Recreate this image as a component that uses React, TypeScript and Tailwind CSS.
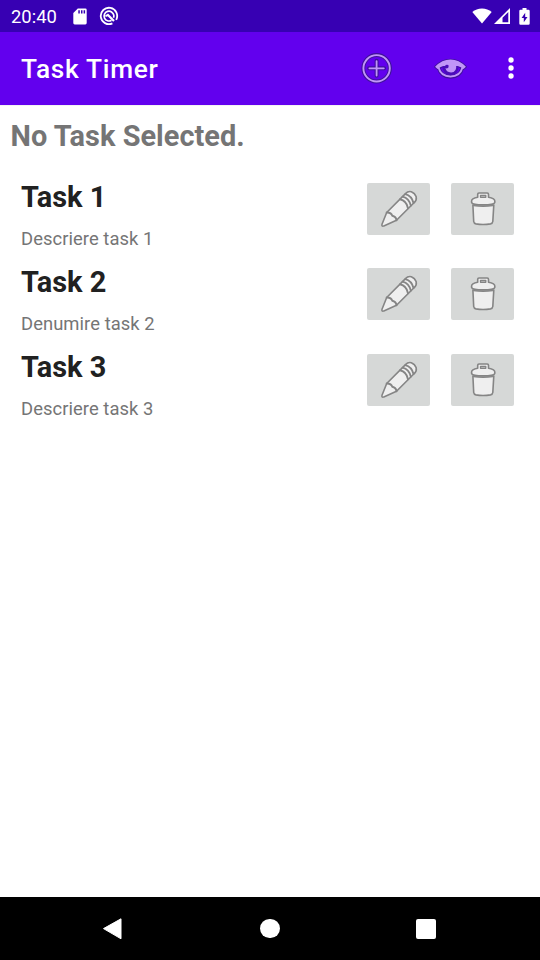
import React from "react";

type IconProps = { className?: string };

const SdCardIcon = ({ className }: IconProps) => (
  <svg viewBox="0 0 14 17" className={className}>
    <path d="M4.8 .5H12.3Q13.7 .5 13.7 1.9V15.1Q13.7 16.5 12.3 16.5H1.7Q.3 16.5 .3 15.1V5Z" fill="#fff" />
    <path d="M5.3 2.2h1.5v3.3H5.3zM8 2.2h1.5v3.3H8zM10.6 2.2h1.5v3.3h-1.5z" fill="#3700b3" />
  </svg>
);

const DebugIcon = ({ className }: IconProps) => (
  <svg viewBox="0 0 20 20" className={className} fill="none" stroke="#fff">
    <path d="M13.4 17.4A8.200 8.200 0 1 1 17.200 13.800" strokeWidth="1.800" />
    <path d="M12.500 14.300A4.900 4.900 0 1 1 14.800 9.200Q15 10.500 14.500 11.800" strokeWidth="1.700" />
    <path d="M8.200 8.200 15 15" strokeWidth="2.200" />
    <path d="M6.500 10.500Q7.500 9 9.500 9.500" strokeWidth="1.600" />
  </svg>
);

const WifiIcon = ({ className }: IconProps) => (
  <svg viewBox="0 0 20 16" className={className}>
    <path d="M.3 4.1Q4.3 .6 10 .6T19.7 4.1L10 15.6Z" fill="#fff" />
  </svg>
);

const SignalIcon = ({ className }: IconProps) => (
  <svg viewBox="0 0 16 16" className={className}>
    <path fillRule="evenodd" d="M0 16 16 0V16ZM8.5 9.8V14.3H14.3V4Z" fill="#fff" />
  </svg>
);

const BatteryIcon = ({ className }: IconProps) => (
  <svg viewBox="0 0 11 17" className={className}>
    <path d="M3.5 0h4v1.8h2q1.2 0 1.2 1.2v12.5q0 1.2-1.2 1.2h-8Q.3 16.700 .3 15.500V3Q.3 1.800 1.500 1.800h2Z" fill="#fff" />
    <path d="M6.200 4.700 2.600 10h2.200v4.300L8.500 8.900H6.200Z" fill="#3700b3" />
  </svg>
);

const AddIcon = ({ className }: IconProps) => (
  <svg viewBox="0 0 32 32" className={className} fill="none">
    <circle cx="15.600" cy="16.300" r="13.300" stroke="#3f129a" strokeWidth="4" />
    <path d="M15.600 8.800v15M8.100 16.300h15" stroke="#3f129a" strokeWidth="4" strokeLinecap="round" />
    <circle cx="15.600" cy="16.300" r="13.200" stroke="#c195f8" strokeWidth="1.900" />
    <path d="M15.600 9.100v14.400M8.400 16.300h14.400" stroke="#c195f8" strokeWidth="1.800" strokeLinecap="round" />
  </svg>
);

const EyeIcon = ({ className }: IconProps) => (
  <svg viewBox="0.500 -0.500 34 22" className={className} strokeLinecap="round" strokeLinejoin="round">
    <path d="M5 10Q7.500 19.400 17 19.400T29 10" fill="#6200ee" stroke="#3f129a" strokeWidth="3.600" />
    <path d="M1.800 9.300Q8.500 2.300 17 2.300T32.200 9.300L30 11.200Q27 9 24 8.400H10Q7 9 4 11.200Z" fill="#c195f8" stroke="#3f129a" strokeWidth="2.200" />
    <path d="M5 10Q7.500 19 17 19T29 10" fill="none" stroke="#c195f8" strokeWidth="1.900" />
    <circle cx="17" cy="9.800" r="8" fill="#4a0cb8" />
    <path d="M1.600 9.300Q8.500 2 17 2T32.400 9.300L30 11.500Q27.500 9.200 24.300 8.400H9.700Q6.500 9.200 4 11.500Z" fill="#c195f8" />
    <path d="M12 7.500H22.600Q23.600 14.700 17.600 15Q12.500 14.700 12 10.500Q14 11.600 15.200 9.500Z" fill="#c195f8" />
    <path d="M11.500 8.500Q12.500 6.800 14.800 7.600Q15.800 9.800 13.500 10.300L11.200 10Z" fill="#4a0cb8" />
  </svg>
);

const MoreIcon = ({ className }: IconProps) => (
  <svg viewBox="0 0 6 22" className={className} fill="#fff">
    <circle cx="3" cy="3" r="2.700" />
    <circle cx="3" cy="11" r="2.700" />
    <circle cx="3" cy="19" r="2.700" />
  </svg>
);

const PencilIcon = ({ className }: IconProps) => (
  <svg viewBox="0 0 38 38" className={className} fill="#efefef" stroke="#858585" strokeWidth="1.600" strokeLinejoin="round" strokeLinecap="round">
    <path d="M2.300 36Q1.600 35.500 2 34.200L6.700 22.500 25.500 3.600Q28 .9 31.300 1.700Q34.800 3 36.200 6.800Q36.900 10.300 34 12.800L16.500 30.300L3.800 35.900Q2.800 36.400 2.300 36Z" />
    <path d="M6.700 22.500Q11.200 22.300 12.300 25.800Q16 26.500 16.500 30.300" fill="none" strokeWidth="1.900" />
    <path d="M20 9.200Q26.500 10.500 28 18.200M22.600 6.600Q29.100 8.200 30.800 15.600M25.300 4.100Q31.700 5.700 33.500 13" fill="none" strokeWidth="1.900" />
  </svg>
);

const TrashIcon = ({ className }: IconProps) => (
  <svg viewBox="0 0 26 34" className={className} fill="#efefef" stroke="#858585" strokeWidth="1.600" strokeLinejoin="round">
    <path d="M2.900 13 3.700 29.500Q3.900 31.400 6 31.900Q13 33.200 20.500 31.900Q22.600 31.400 22.800 29.500L23.800 13Z" />
    <path d="M7.700 5.300V2.200Q7.700 1 9 1H17.200Q18.500 1 18.500 2.200V5.300Q24.800 6.500 24.800 9V10.300Q24.500 12.800 13.200 12.800T1.600 10.300V9Q1.600 6.500 7.700 5.300Z" />
    <path d="M10.500 5.300V3.500H15.800V5.300Z" fill="#d6d8d7" strokeWidth="1.300" />
    <path d="M3.500 13.600Q13 15.100 22.900 13.600" fill="none" strokeWidth="1.200" />
  </svg>
);

const tasks = [
  { name: "Task 1", description: "Descriere task 1" },
  { name: "Task 2", description: "Denumire task 2" },
  { name: "Task 3", description: "Descriere task 3" },
];

function TaskRow({ name, description }: { name: string; description: string }) {
  return (
    <li className="flex h-[85.400px] items-start justify-between pl-[21px] pr-[26px]">
      <div className="pt-[6.700px]">
        <h2 className="text-[28.900px] font-bold leading-[34px] text-[#212121]">{name}</h2>
        <p className="mt-[14px] text-[18.400px] leading-[22px] tracking-[0.060px] text-[#757575]">{description}</p>
      </div>
      <div className="flex gap-[21px] pt-[10px]">
        <button aria-label="Edit" className="flex h-[52px] w-[63px] items-center justify-center rounded-[2px] bg-[#d6d8d7]">
          <PencilIcon className="h-[38px] w-[38px]" />
        </button>
        <button aria-label="Delete" className="flex h-[52px] w-[63px] items-center justify-center rounded-[2px] bg-[#d6d8d7]">
          <TrashIcon className="h-[34px] w-[26px]" />
        </button>
      </div>
    </li>
  );
}

export default function App() {
  return (
    <div className="flex h-[960px] w-[540px] flex-col overflow-hidden bg-white font-['Roboto',sans-serif]">
      <div className="flex h-8 shrink-0 items-center bg-[#3700b3] pl-[11px] pr-[10px] text-white">
        <span className="pt-px text-[18.400px] leading-8">20:40</span>
        <SdCardIcon className="ml-[16.500px] h-[17px] w-[14px]" />
        <DebugIcon className="ml-3 h-5 w-5" />
        <WifiIcon className="ml-auto h-4 w-5" />
        <SignalIcon className="ml-[2px] h-4 w-4" />
        <BatteryIcon className="ml-[9px] h-[17px] w-[11px]" />
      </div>
      <header className="flex h-[73px] shrink-0 items-center bg-[#6200ee] pl-[21px] pr-[26px] text-white">
        <h1 className="pt-[2px] text-[26.250px] font-medium tracking-[0.700px]">Task Timer</h1>
        <AddIcon className="mb-px ml-auto h-8 w-8" />
        <EyeIcon className="mb-px ml-[41px] h-[22px] w-[34px]" />
        <MoreIcon className="mb-px ml-[40px] h-[22px] w-[6px]" />
      </header>
      <main className="flex-1 border-t border-[#f3f3f3] pt-[13px]">
        <p className="pl-[10.500px] text-[28.900px] font-bold leading-[34px] tracking-[0.040px] text-[#757575]">No Task Selected.</p>
        <ul className="mt-5">
          {tasks.map((task) => (
            <TaskRow key={task.name} {...task} />
          ))}
        </ul>
      </main>
      <nav className="flex h-[63px] shrink-0 items-center bg-black pl-[102.500px] pr-[104.500px]">
        <svg viewBox="0.500 0 20 22" className="h-[22px] w-5" fill="#fff" stroke="#fff" strokeLinejoin="round">
          <path d="M1 10.600 18.500 .8V20.800Z" />
        </svg>
        <span className="ml-[137.500px] h-[19.500px] w-[19.500px] rounded-full bg-white" />
        <span className="ml-auto h-5 w-5 rounded-[2px] bg-white" />
      </nav>
    </div>
  );
}
